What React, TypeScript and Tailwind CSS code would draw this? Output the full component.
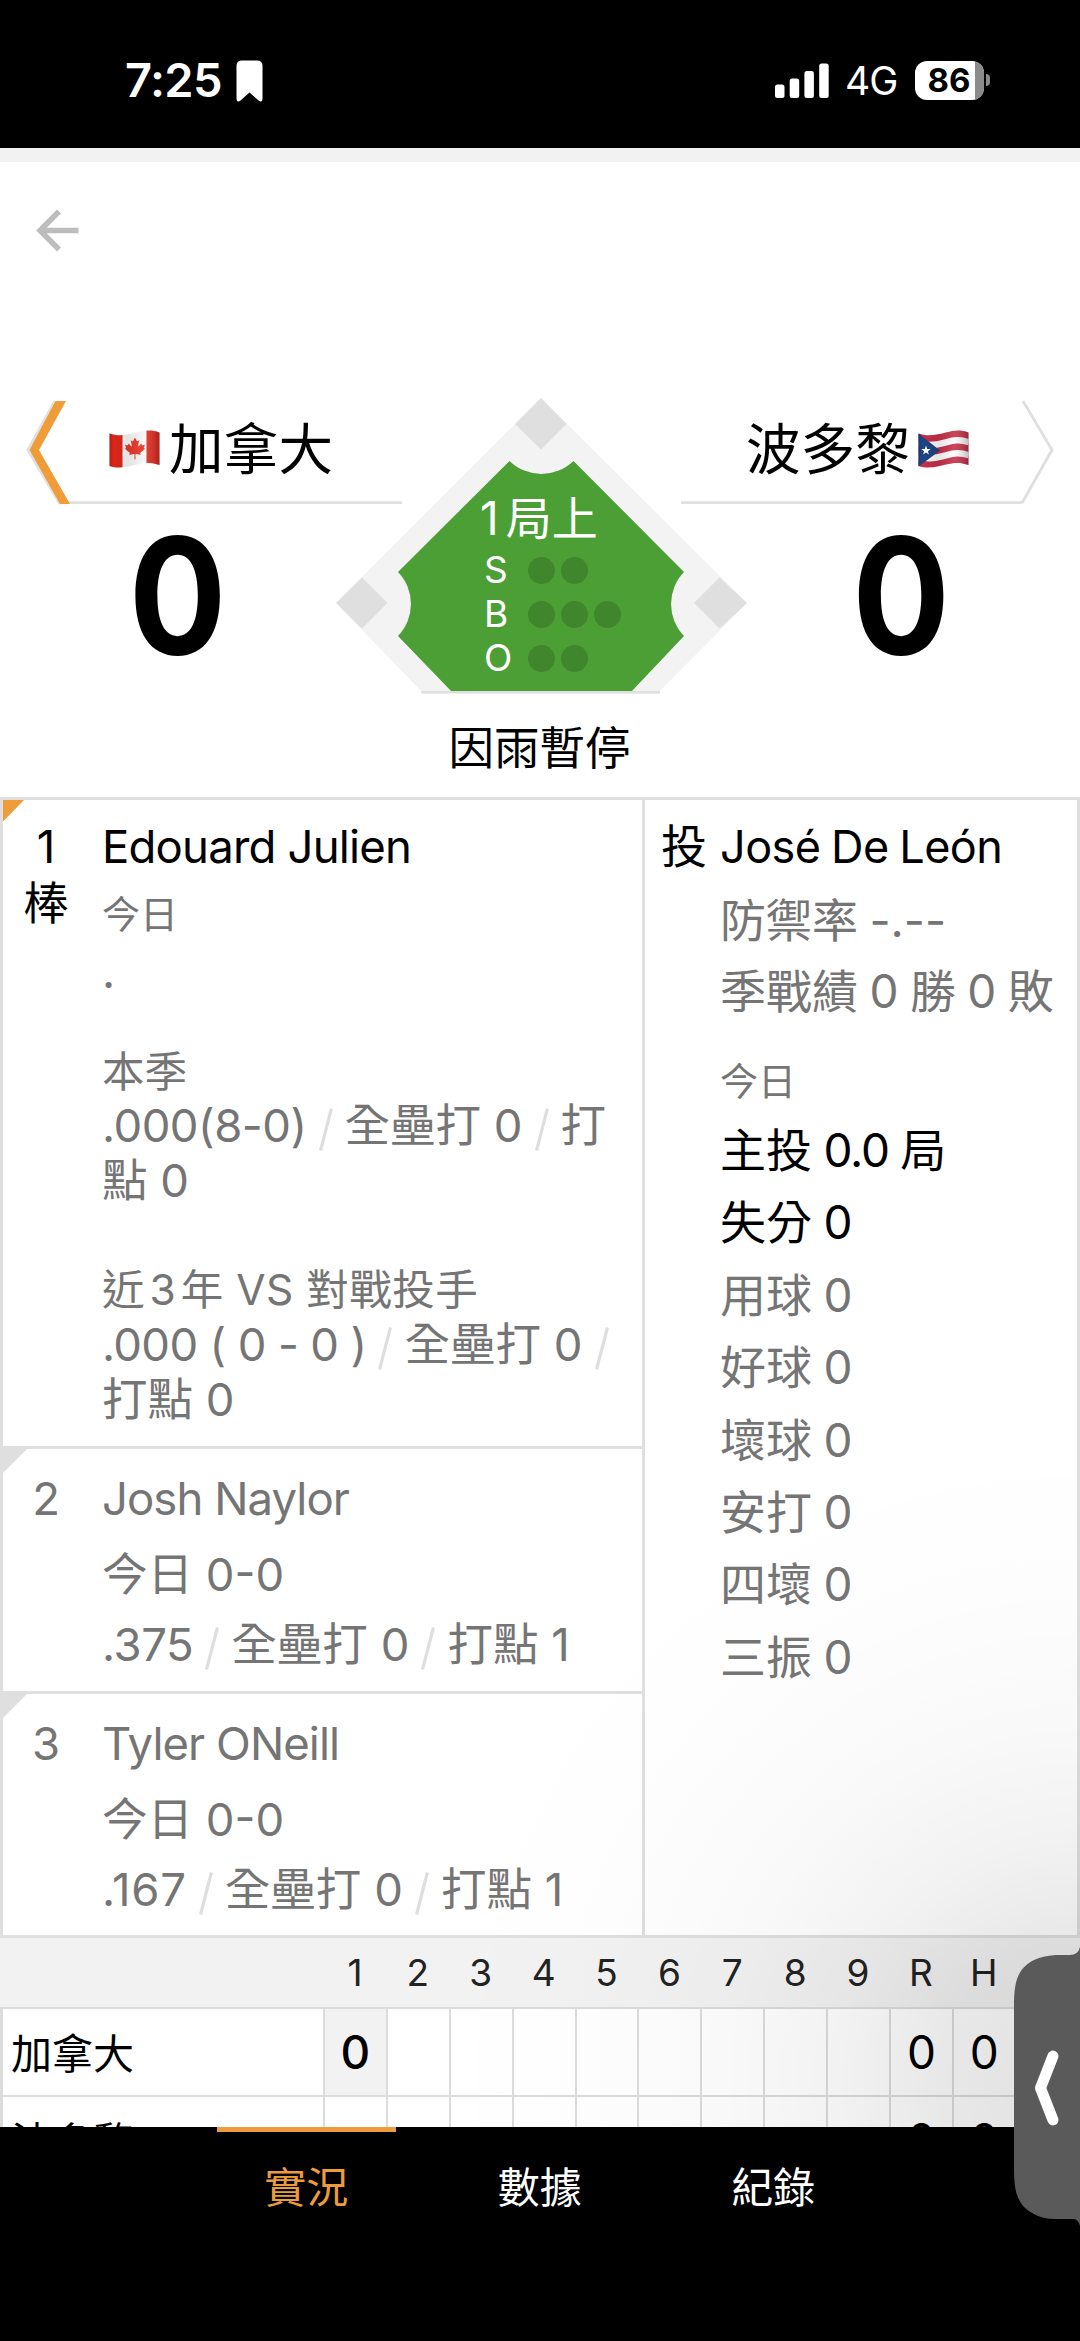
import type { ReactNode } from "react";
import { FaCanadianMapleLeaf } from "react-icons/fa";

const innings = ["1", "2", "3", "4", "5", "6", "7", "8", "9", "R", "H", "E"];

function StatusBar() {
  return (
    <header className="flex h-[148px] shrink-0 items-start bg-black text-white">
      <div className="flex w-full items-center pl-[125px] pt-[53px]">
        <span className="-mt-[3px] w-[111px] text-[47px] font-semibold leading-[56px] tracking-[-0.6px]">7:25</span>
        <svg width="27" height="42" viewBox="0 0 27 42" className="-mt-[1px] shrink-0">
          <path d="M6 0.5H21Q26.5 0.5 26.5 6V38.5Q26.5 43 22.5 40.5L13.5 32.5L4.5 40.5Q0.5 43 0.5 38.5V6Q0.5 0.5 6 0.5Z" fill="#fff" />
        </svg>
        <svg width="54" height="36" viewBox="0 0 54 36" className="-mt-[2px] ml-[512px] shrink-0" fill="#fff">
          <rect x="0" y="21.500" width="9.500" height="13.500" rx="2.500" />
          <rect x="14.700" y="15.500" width="9.500" height="19.500" rx="2.500" />
          <rect x="29.400" y="8" width="9.500" height="27" rx="2.500" />
          <rect x="44.200" y="0.500" width="9.500" height="34.500" rx="2.500" />
        </svg>
        <span className="-mt-[1px] ml-[16px] w-[70px] text-[39px] leading-[58px] tracking-[-1px]">4G</span>
        <div className="relative -mt-[3px] flex h-[39px] w-[69px] shrink-0 items-center justify-center overflow-hidden rounded-[12px] bg-white">
          <div className="absolute right-0 top-0 h-full w-[9px] bg-[#8b8b8b]" />
          <span className="relative pr-px text-[33px] font-bold leading-[39px] text-black">86</span>
        </div>
        <div className="-mt-[3px] ml-[2px] h-[12px] w-[4px] rounded-r-full bg-[#8b8b8b]" />
      </div>
    </header>
  );
}

function CanadaFlag() {
  return (
    <svg width="51" height="39" viewBox="0 0 51 39" className="shrink-0">
      <defs>
        <clipPath id="ca-wave">
          <path d="M0.500 3.500C10 7 20 4.500 28 2.500S42 -0.500 50.500 2.500V35C42 32 36 32.500 28 34.500S10 39.500 0.500 36Z" />
        </clipPath>
        <linearGradient id="ca-shade">
          <stop offset="0" stopColor="#000" stopOpacity="0.250" />
          <stop offset="0.080" stopColor="#000" stopOpacity="0.020" />
          <stop offset="0.350" stopColor="#000" stopOpacity="0.080" />
          <stop offset="0.700" stopColor="#fff" stopOpacity="0.100" />
          <stop offset="1" stopColor="#000" stopOpacity="0.250" />
        </linearGradient>
      </defs>
      <g clipPath="url(#ca-wave)">
        <rect width="51" height="39" fill="#f7f7f7" />
        <rect width="13.500" height="39" fill="#e0261b" />
        <rect x="37.500" width="13.500" height="39" fill="#e0261b" />
        <FaCanadianMapleLeaf x="15" y="7.500" size={22} color="#e83528" />
        <rect width="51" height="39" fill="url(#ca-shade)" />
      </g>
    </svg>
  );
}

function PuertoRicoFlag() {
  return (
    <svg width="51" height="39" viewBox="0 0 51 39" className="shrink-0">
      <defs>
        <clipPath id="pr-wave">
          <path d="M0.500 3.500C10 7 20 4.500 28 2.500S42 -0.500 50.500 2.500V35C42 32 36 32.500 28 34.500S10 39.500 0.500 36Z" />
        </clipPath>
        <linearGradient id="pr-shade">
          <stop offset="0" stopColor="#000" stopOpacity="0.200" />
          <stop offset="0.080" stopColor="#000" stopOpacity="0" />
          <stop offset="0.400" stopColor="#000" stopOpacity="0.080" />
          <stop offset="0.700" stopColor="#fff" stopOpacity="0.100" />
          <stop offset="1" stopColor="#000" stopOpacity="0.250" />
        </linearGradient>
      </defs>
      <g clipPath="url(#pr-wave)">
        <rect width="51" height="39" fill="#c52f48" />
        <g fill="none" stroke="#fafafa" strokeWidth="6.500">
          <path d="M0 13.200C10 17 20 14.500 28 12.300S42 9.200 51 12.300" />
          <path d="M0 26.200C10 30 20 27.500 28 25.300S42 22.200 51 25.300" />
        </g>
        <path d="M0 3L22 20.500L0 37Z" fill="#1f4484" />
        <path d="M8 15.600L9.200 19H12.700L9.900 21.200L10.900 24.600L8 22.600L5.100 24.600L6.100 21.200L3.300 19H6.800Z" fill="#fff" />
        <rect width="51" height="39" fill="url(#pr-shade)" />
      </g>
    </svg>
  );
}

function Diamond() {
  return (
    <svg width="411" height="297" viewBox="336 398 411 297" className="absolute left-[-66px] top-0">
      <path d="M541 398L747 603L660 691H421L336 603Z" fill="#f3f3f3" />
      <path d="M509.500 461A46 46 0 0 0 573.500 461L684 572A46 46 0 0 0 684 636L631 692H452L398 636A46 46 0 0 0 398 572Z" fill="#4c9f34" />
      <g fill="#dfdfdf">
        <path d="M541 398L566.500 424L541 449.500L515 424Z" />
        <path d="M336 603L362 577.500L387.500 603L362 628.500Z" />
        <path d="M694 603L719.500 577.500L747 603L719.500 628.500Z" />
        <rect x="421.500" y="691" width="238.500" height="2.600" />
      </g>
    </svg>
  );
}

function Count({ label, total }: { label: string; total: number }) {
  return (
    <div className="flex h-[44px] items-center">
      <span className="w-[44px] text-[37px] leading-[44px]">{label}</span>
      <div className="flex gap-[6px]">
        {Array.from({ length: total }, (_, i) => (
          <span key={i} className="size-[27px] rounded-full bg-[#40862c]" />
        ))}
      </div>
    </div>
  );
}

function Score({ children }: { children: ReactNode }) {
  return <div className="scale-x-[0.9] text-[161px] font-bold leading-[199px]">{children}</div>;
}

function Scoreboard() {
  return (
    <section className="flex h-[399px] shrink-0">
      <div className="relative w-[402px]">
        <svg width="402" height="107" viewBox="0 398 402 107" className="absolute left-0 top-0">
          <path d="M55 401L28 450L60 504" fill="none" stroke="#e0e0e0" strokeWidth="3" />
          <rect x="60" y="501.300" width="342" height="2.700" fill="#dfdfdf" />
          <path d="M55.500 401H66L39 450L70 504H60L29.500 450Z" fill="#f09c38" />
        </svg>
        <div className="relative flex h-[98px] items-center pl-[109px] pt-[4px] text-[54.500px]">
          <CanadaFlag />
          <span className="ml-[9px] mt-[2px] tracking-[0.300px]">加拿大</span>
        </div>
        <div className="pr-[47px] text-center">
          <Score>0</Score>
        </div>
      </div>

      <div className="relative w-[279px]">
        <Diamond />
        <div className="relative flex flex-col pl-[82px] pt-[97px] text-white">
          <div className="mb-[7px] -ml-[4px] text-[46px] leading-[46px]">
            <span className="mr-[7px]">1</span>局上
          </div>
          <Count label="S" total={2} />
          <Count label="B" total={3} />
          <Count label="O" total={2} />
        </div>
        <div className="mt-[41px] whitespace-nowrap pr-[4px] text-center text-[45.500px] leading-[56px]">因雨暫停</div>
      </div>

      <div className="relative w-[399px]">
        <svg width="399" height="107" viewBox="681 398 399 107" className="absolute left-0 top-0">
          <rect x="681" y="501.300" width="341" height="2.700" fill="#dfdfdf" />
          <path d="M1023 401L1052 450L1022 503" fill="none" stroke="#dfdfdf" strokeWidth="2.800" />
        </svg>
        <div className="relative flex h-[98px] items-center pl-[65px] pt-[4px] text-[54.500px]">
          <span className="mr-[8px] mt-[2px] tracking-[0.300px]">波多黎</span>
          <PuertoRicoFlag />
        </div>
        <div className="pl-[41px] text-center">
          <Score>0</Score>
        </div>
      </div>
    </section>
  );
}

function Slash() {
  return (
    <svg width="14" height="43" viewBox="0 0 14 43" className="mx-[12px] inline-block align-[-9px]">
      <path d="M12.500 0.500L1.500 42.500" stroke="#dedede" strokeWidth="3.200" />
    </svg>
  );
}

function BatterRow({ order, name, avg, rbi, last }: { order: string; name: string; avg: ReactNode; rbi: string; last?: boolean }) {
  return (
    <div className={`relative flex border-b-[3px] border-[#dfdfdf] ${last ? "h-[244px]" : "h-[245px]"}`}>
      <svg width="30" height="30" viewBox="0 0 30 30" className="absolute -left-[3px] -top-[3px]">
        <path d="M0 0H30L3 27H0Z" fill="#dfdfdf" />
      </svg>
      <div className="w-[86px] pt-[22px] text-center">{order}</div>
      <div className="whitespace-nowrap pl-[13px] pt-[22px]">
        <div className="tracking-[-0.950px]">{name}</div>
        <div className="mt-[21px]">今日 0-0</div>
        <div className="mt-[15px]">
          {avg}
          <Slash />
          全壘打 0
          <Slash />
          打點 {rbi}
        </div>
      </div>
    </div>
  );
}

function Batters() {
  return (
    <div className="w-[645px] border-x-[3px] border-[#dfdfdf] text-[45.500px] leading-[55px] text-[#757575]">
      <div className="relative flex h-[649px] border-b-[3px] border-[#dfdfdf]">
        <svg width="21" height="22" viewBox="0 0 21 22" className="absolute left-0 top-0">
          <path d="M0 0H21L0 21.500Z" fill="#f09c38" />
        </svg>
        <div className="flex w-[86px] flex-col items-center pt-[19px] text-black">
          <span>1</span>
          <span className="mt-[2px]">棒</span>
        </div>
        <div className="whitespace-nowrap pl-[13px] pt-[19px]">
          <div className="tracking-[-0.800px] text-black">Edouard Julien</div>
          <div className="mt-[13px] text-[38px]">今日</div>
          <div className="mt-[2px]">.</div>
          <div className="mt-[46px] text-[42.500px] leading-[53px]">本季</div>
          <div>
            <span className="tracking-[-0.500px]">.000(8-0)</span>
            <Slash />
            全壘打 0
            <Slash />打
          </div>
          <div>點 0</div>
          <div className="mt-[54px] text-[42.500px] tracking-[0.500px]">
            近<span className="mx-[4.500px]">3</span>年 VS 對戰投手
          </div>
          <div>
            <span className="tracking-[-0.650px]">.000 ( 0 - 0 )</span>
            <Slash />
            全壘打 0
            <Slash />
          </div>
          <div>打點 0</div>
        </div>
      </div>
      <BatterRow order="2" name="Josh Naylor" avg={<span className="tracking-[-0.400px]">.375</span>} rbi="1" />
      <BatterRow order="3" name="Tyler ONeill" avg={<span className="tracking-[0.800px]">.167</span>} rbi="1" last />
    </div>
  );
}

function Pitcher() {
  const counts = ["用球", "好球", "壞球", "安打", "四壞", "三振"];
  return (
    <div className="flex flex-1 border-b-[3px] border-r-[3px] border-[#dfdfdf] text-[46px] leading-[55px] text-[#757575] [word-spacing:-1.5px]">
      <div className="w-[75px] pl-[16px] pt-[19px] text-black">投</div>
      <div className="whitespace-nowrap pt-[19px]">
        <div className="text-[45px] tracking-[-0.550px] text-black">José De León</div>
        <div className="mt-[18.500px]">防禦率 -.--</div>
        <div className="mt-[16.500px]">季戰績 0 勝 0 敗</div>
        <div className="mt-[35px] text-[38px]">今日</div>
        <div className="mt-[5px] leading-[72.400px]">
          <div className="text-black">
            主投 <span className="tracking-[-1.200px]">0.0</span> 局
          </div>
          <div className="text-black">失分 0</div>
          {counts.map((c) => (
            <div key={c}>{c} 0</div>
          ))}
        </div>
      </div>
    </div>
  );
}

function LineScoreRow({ team, current }: { team: string; current: boolean }) {
  return (
    <div className="grid h-[88px] shrink-0 grid-cols-[325px_repeat(12,62.900px)] grid-rows-[86px] border-b-[2px] border-[#dcdcdc] leading-[87px]">
      <div className="border-l-[3px] border-r-[2px] border-[#dcdcdc] pl-[8px] pt-[2px] text-[41px]">{team}</div>
      {innings.map((n, i) => (
        <div
          key={n}
          className={`border-r-[2px] border-[#dcdcdc] text-center text-[46px] ${i === 0 && current ? "bg-[#f2f2f2] font-medium" : ""}`}
        >
          {(i === 0 && current) || i > 8 ? "0" : ""}
        </div>
      ))}
    </div>
  );
}

function LineScore() {
  return (
    <section className="flex h-[189px] shrink-0 flex-col overflow-hidden">
      <div className="grid h-[71px] shrink-0 grid-cols-[325px_repeat(12,62.900px)] border-b-[2px] border-[#dcdcdc] bg-[#f2f2f2] text-center text-[37px] leading-[69px] text-[#222]">
        <span />
        {innings.map((n) => (
          <span key={n} className="pr-[3px]">
            {n}
          </span>
        ))}
      </div>
      <LineScoreRow team="加拿大" current />
      <LineScoreRow team="波多黎" current={false} />
    </section>
  );
}

function TabBar() {
  return (
    <nav className="flex flex-1 bg-black pl-[189.500px] text-[42px] text-white">
      {["實況", "數據", "紀錄"].map((t, i) => (
        <div key={t} className="flex w-[233.500px] flex-col items-center">
          <div className={`h-[5px] w-[179px] ${i === 0 ? "bg-[#ec9c3d]" : "bg-black"}`} />
          <span className={`mt-[26px] leading-[60px] ${i === 0 ? "text-[#ec9c3d]" : ""}`}>{t}</span>
        </div>
      ))}
    </nav>
  );
}

function DrawerHandle() {
  return (
    <>
      <div className="pointer-events-none absolute right-0 top-[1400px] h-[727px] w-[720px] bg-[radial-gradient(circle_640px_at_720px_680px,rgba(0,0,0,0.12),rgba(0,0,0,0.09)_22%,rgba(0,0,0,0.052)_38%,rgba(0,0,0,0.022)_56%,rgba(0,0,0,0.006)_78%,transparent)]" />
      <svg width="66" height="280" viewBox="1014 1947 66 280" className="absolute right-0 top-[1947px]">
        <path
          d="M1080 1947Q1078 1955 1070 1955H1056Q1042 1956 1034 1960C1018 1968 1014 1981 1014 2005V2169C1014 2193 1018 2206 1034 2214Q1042 2219 1056 2219H1074Q1078 2219 1080 2226Z"
          fill="#5a5a5a"
        />
        <path d="M1053 2056L1040.500 2088L1053 2120" fill="none" stroke="#fff" strokeWidth="11" strokeLinecap="round" strokeLinejoin="round" />
      </svg>
    </>
  );
}

export default function App() {
  return (
    <main className="relative flex h-[2341px] w-[1080px] flex-col overflow-hidden bg-white font-['Inter','Noto_Sans_CJK_TC',sans-serif] text-black">
      <StatusBar />
      <div className="h-[14px] shrink-0 bg-[#f2f2f2]" />
      <div className="h-[236px] shrink-0 pl-[36px] pt-[47px]">
        <svg width="44" height="44" viewBox="0 0 44 44" fill="none" stroke="#bdbdbd" strokeWidth="5.500">
          <path d="M42.500 21.500H5M23 2.500L4 21.500L23 40.500" />
        </svg>
      </div>
      <Scoreboard />
      <section className="flex h-[1141px] shrink-0 border-t-[3px] border-[#dfdfdf]">
        <Batters />
        <Pitcher />
      </section>
      <LineScore />
      <TabBar />
      <DrawerHandle />
    </main>
  );
}
